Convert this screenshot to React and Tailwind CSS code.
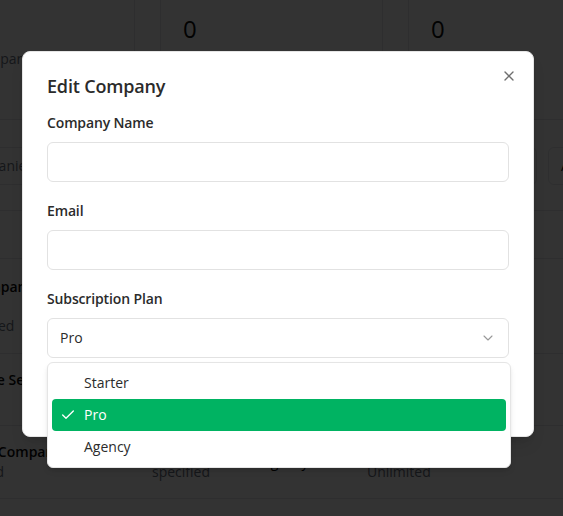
import React from "react";

function Check() {
  return (
    <svg width="16" height="16" viewBox="0 0 24 24" fill="none" stroke="currentColor" strokeWidth="2" strokeLinecap="round" strokeLinejoin="round">
      <path d="M20 6 9 17l-5-5" />
    </svg>
  );
}

function Chevron() {
  return (
    <svg width="16" height="16" viewBox="0 0 24 24" fill="none" stroke="currentColor" strokeWidth="1.6" strokeLinecap="round" strokeLinejoin="round">
      <path d="m6 9 6 6 6-6" />
    </svg>
  );
}

function XIcon() {
  return (
    <svg width="16" height="16" viewBox="0 0 24 24" fill="none" stroke="currentColor" strokeWidth="2" strokeLinecap="round" strokeLinejoin="round">
      <path d="M18 6 6 18" />
      <path d="m6 6 12 12" />
    </svg>
  );
}

const rows = [
  { name: "Test Company", sub: "Not verified", c2: ["Not", "specified"], c3: "Pro", c4: ["0 /", "Unlimited"], h: "h-[95px]", gap: "gap-[19px]", pl: "pl-[27px]" },
  { name: "Enterprise Services", sub: "Verified", c2: ["Not", "specified"], c3: "Starter", c4: ["0 /", "Unlimited"], h: "h-[72px]", gap: "gap-0", pl: "pl-[24px]" },
  { name: "Demo Company", sub: "Verified", c2: ["Not", "specified"], c3: "Agency", c4: ["0 /", "Unlimited"], h: "h-[73px]", gap: "gap-0", pl: "pl-[43px]" },
];

export default function App() {
  return (
    <div className="relative h-[516px] w-[563px] overflow-hidden bg-white font-['Open_Sans',sans-serif] text-[#0a0a0a]">
      {/* underlying page */}
      <div className="ml-[-89px] w-[760px]">
        <div className="-mt-px grid grid-cols-[224px_223px_224px] gap-x-[25px]">
          {["Total Companies", "Active Users", "Subscriptions"].map((t) => (
            <div key={t} className="h-[121px] rounded-b-lg border border-[#e5e7eb] pl-[22px] pt-[13px]">
              <div className="text-2xl leading-8">0</div>
              <div className="mt-1 text-sm leading-5 text-[#6b7280]">{t}</div>
            </div>
          ))}
        </div>
        <div className="mt-[27px] flex gap-[11px]">
          <div className="flex h-[38px] w-[500px] items-center rounded-md border border-[#e5e7eb] pl-[2px] text-sm text-[#6b7280]">
            Search companies...
          </div>
          <div className="h-[38px] w-[115px] rounded-md border border-[#e5e7eb]" />
          <div className="flex h-[38px] w-[100px] items-center rounded-md border border-[#e5e7eb] px-3 text-sm">
            All plans
          </div>
        </div>
        <div className="mt-[25px] border-t border-[#e5e7eb] text-sm">
          <div className="h-12 border-b border-[#e5e7eb]" />
          {rows.map((r) => (
            <div key={r.name} className={`grid grid-cols-[241px_110px_105px_150px] items-center border-b border-[#e5e7eb] ${r.h}`}>
              <div className={`flex flex-col ${r.pl} ${r.gap}`}>
                <div className="whitespace-nowrap font-semibold">{r.name}</div>
                <div className="text-[#6b7280]">{r.sub}</div>
              </div>
              <div className="text-[#6b7280]">
                <div>{r.c2[0]}</div>
                <div>{r.c2[1]}</div>
              </div>
              <div>{r.c3}</div>
              <div className="text-[#6b7280]">
                <div>{r.c4[0]}</div>
                <div>{r.c4[1]}</div>
              </div>
            </div>
          ))}
        </div>
      </div>

      {/* overlay */}
      <div className="absolute inset-0 bg-black/80" />

      {/* dialog */}
      <div className="absolute left-[22px] top-[51px] w-[512px] rounded-lg border border-[#e5e5e5] bg-white px-6 pb-6 pt-[25px] shadow-lg">
        <button className="absolute right-4 top-4 text-[#333] opacity-70">
          <XIcon />
        </button>
        <h2 className="text-lg font-[550] leading-none tracking-[-0.01em] text-[#2b2b2b]">Edit Company</h2>
        <div className="mt-[21px]">
          <label className="block text-sm font-[550] leading-none tracking-[-0.01em] text-[#2b2b2b]">Company Name</label>
          <div className="mt-3 h-10 rounded-md border border-[#e2e2e2]" />
        </div>
        <div className="mt-[22px]">
          <label className="block text-sm font-[550] leading-none tracking-[-0.01em] text-[#2b2b2b]">Email</label>
          <div className="mt-3 h-10 rounded-md border border-[#e2e2e2]" />
        </div>
        <div className="mt-[22px]">
          <label className="block text-sm font-[550] leading-none tracking-[-0.01em] text-[#2b2b2b]">Subscription Plan</label>
          <div className="mt-3 flex h-10 items-center justify-between rounded-md border border-[#e2e2e2] px-3 text-sm text-[#2b2b2b]">
            <span>Pro</span>
            <span className="text-[#333] opacity-50">
              <Chevron />
            </span>
          </div>
        </div>
        <div className="mt-[14px] flex justify-end gap-2">
          <div className="flex h-10 items-center rounded-md border border-[#e2e2e2] px-4 text-sm">Cancel</div>
          <div className="flex h-10 items-center rounded-md bg-[#00b362] px-4 text-sm text-white">Save Changes</div>
        </div>
      </div>

      {/* select dropdown */}
      <div className="absolute left-[47px] top-[362px] w-[464px] rounded-md border border-[#e5e5e5] bg-white p-1 text-sm text-[#2b2b2b] shadow-md">
        <div className="flex h-8 items-center rounded-sm pl-8">Starter</div>
        <div className="relative flex h-8 items-center rounded-sm bg-[#00b362] pl-8 text-white">
          <span className="absolute left-2 top-2">
            <Check />
          </span>
          Pro
        </div>
        <div className="flex h-8 items-center rounded-sm pl-8">Agency</div>
      </div>
    </div>
  );
}
